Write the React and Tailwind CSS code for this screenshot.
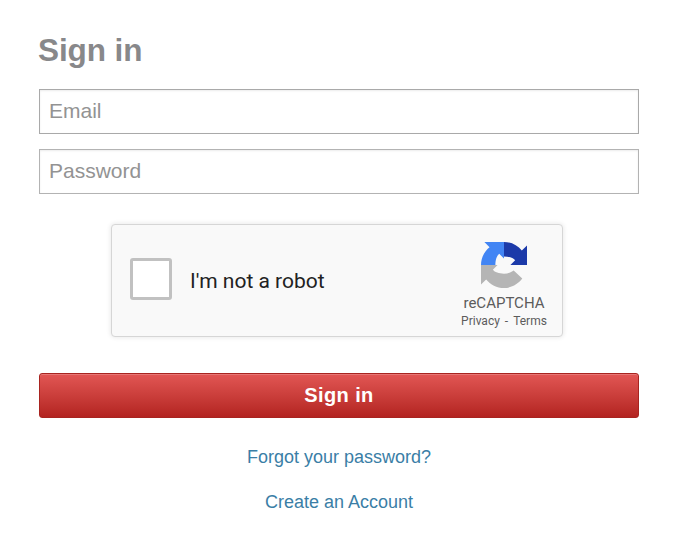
export default function App() {
  return (
    <div className="min-h-[541px] bg-white px-[39px] pt-[28px] font-['Liberation_Sans',Arial,sans-serif]">
      <div className="w-[600px]">
        {/* Header */}
        <h1 className="mb-[17px] -ml-px text-[31.5px] leading-[44px] font-bold text-[#88888a] tracking-[-0.1px]">Sign in</h1>

        {/* Fields */}
        <input
          type="email"
          placeholder="Email"
          className="mb-[15px] block h-[45px] w-full border border-[#a9a9a9] bg-white px-[9px] pb-[2px] text-[21px] shadow-[inset_0_1px_2px_rgba(0,0,0,0.08)] placeholder:text-[#939393] focus:outline-none"
        />
        <input
          type="password"
          placeholder="Password"
          className="block h-[45px] w-full border border-[#b3b3b3] bg-white px-[9px] pb-[2px] text-[21px] shadow-[inset_0_1px_2px_rgba(0,0,0,0.08)] placeholder:text-[#939393] focus:outline-none"
        />

        {/* reCAPTCHA */}
        <div className="mt-[30px] ml-[72px] flex h-[113px] w-[452px] items-start justify-between rounded-[4px] border border-[#d6d6d6] bg-[#f9f9f9] pr-[15px] pl-[18px] font-['Roboto',sans-serif] shadow-[0_0_4px_1px_rgba(0,0,0,0.08)]">
          <div className="flex items-center gap-[18px] pt-[33px]">
            <div className="h-[42px] w-[42px] rounded-[3px] border-[3px] border-[#c1c1c1] bg-white" />
            <span className="mt-[6px] text-[21px] text-[#222]">I'm not a robot</span>
          </div>
          <div className="flex w-[86px] flex-col items-center pt-[17px] text-[#5c5c5c]">
            <svg viewBox="0 0 64 64" className="h-[46px] w-[46px]">
              <path d="M32 0C42 0 51 4.7 56.8 11.9L64 4.7V32H40.9L47.5 25.4C45 22 39 20 32 20Z" fill="#1c3aa9" />
              <path d="M32 0C42 0 51 4.7 56.8 11.9L64 4.7V32H40.9L47.5 25.4C45 22 39 20 32 20Z" fill="#4285f4" transform="rotate(-90 32 32)" />
              <path d="M0 32H23L16.5 38.6C19 42 25 44 32 44C37 44 42 42 45.5 39.5L57.4 50.8C51.5 58.5 42.5 64 32 64C22 64 13 59.3 7.2 52.1L0 59.3Z" fill="#b5b5b5" />
            </svg>
            <div className="mt-[6px] text-[15px] leading-[18px]">reCAPTCHA</div>
            <div className="mt-[1px] flex gap-[5px] text-[12px] leading-[16px]">
              <span>Privacy</span>
              <span>-</span>
              <span>Terms</span>
            </div>
          </div>
        </div>

        {/* Submit */}
        <button className="mt-[36px] block h-[45px] w-full rounded-[3px] border border-[#a82420] bg-gradient-to-b from-[#e25654] to-[#b32320] pb-[2px] text-[20px] font-bold tracking-[0.4px] text-white shadow-[inset_0_1px_0_rgba(255,255,255,0.2)]">
          Sign in
        </button>

        {/* Links */}
        <div className="mt-[29px] flex flex-col items-center gap-[24px] text-[18px] leading-[21px] text-[#3a7ea6]">
          <a href="#">Forgot your password?</a>
          <a href="#">Create an Account</a>
        </div>
      </div>
    </div>
  );
}
